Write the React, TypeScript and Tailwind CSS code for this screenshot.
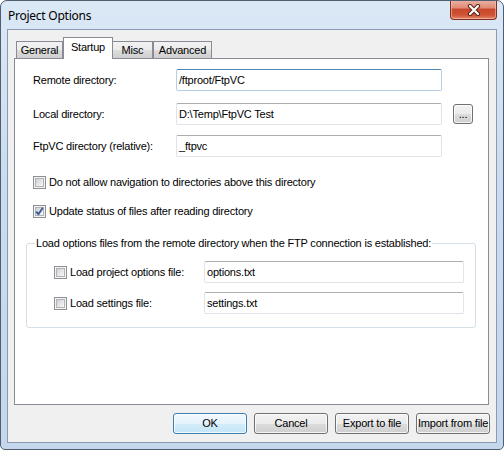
import React from "react";

function TextBox({ value, focused, w }: { value: string; focused?: boolean; w: string }) {
  return (
    <div
      className={`h-[22px] flex items-center pl-[2px] bg-white border rounded-[2px] shrink-0 ${w} ${
        focused
          ? "border-[#b5cfe7] border-t-[#5286b5]"
          : "border-[#e2e3ea] border-t-[#abadb3]"
      }`}
    >
      <span className="whitespace-pre leading-none">{value}</span>
    </div>
  );
}

function Check({ checked }: { checked?: boolean }) {
  return (
    <div className="w-[13px] h-[13px] border border-[#8e8f8f] bg-[#f4f4f4] p-px shrink-0 relative">
      <div className="w-full h-full border border-[#b0b4ba] bg-[linear-gradient(135deg,#cdd1d6_0%,#e6e7e9_55%,#f8f8f8_100%)]" />
      {checked && (
        <svg className="absolute left-0 top-0" width="11" height="11" viewBox="0 0 11 11">
          <path d="M2.2 5.6 L4.4 8.2 L8.8 1.8" fill="none" stroke="#3d5a98" strokeWidth="1.9" strokeLinejoin="round" />
        </svg>
      )}
    </div>
  );
}

function CheckLabel({ checked, label, w }: { checked?: boolean; label: string; w?: string }) {
  return (
    <div className={`flex items-center gap-[3px] shrink-0 ${w ?? ""}`}>
      <Check checked={checked} />
      <span className="leading-none whitespace-nowrap">{label}</span>
    </div>
  );
}

function Btn({ children, primary }: { children: React.ReactNode; primary?: boolean }) {
  return (
    <div
      className={`w-[74px] h-[21px] rounded-[3px] border flex items-center justify-center shadow-[inset_0_0_0_1px_rgba(255,255,255,0.75)] ${
        primary
          ? "border-[#3c7fb1] bg-[linear-gradient(to_bottom,#f1f9fe_0%,#e4f3fc_50%,#d3ecfa_50%,#c6e5f7_100%)]"
          : "border-[#707070] bg-[linear-gradient(to_bottom,#f2f2f2_0%,#ebebeb_50%,#dddddd_50%,#cfcfcf_100%)]"
      }`}
    >
      <span className="leading-none whitespace-nowrap">{children}</span>
    </div>
  );
}

export default function App() {
  return (
    <div className="w-[504px] h-[450px] flex flex-col border border-[#4f5e70] rounded-t-[7px] rounded-b-[5px] overflow-hidden bg-[linear-gradient(to_bottom,#dbe8f6_0%,#cbdcf0_40%,#c4d7ed_100%)] font-['Liberation_Sans',Arial,sans-serif] text-[11px] tracking-[-0.2px] text-black">
      {/* Title bar */}
      <div className="h-[28px] flex items-start justify-between shrink-0">
        <span className="pl-[7px] pt-[7px] text-[12px] leading-[16px] tracking-[-0.25px] font-['Noto_Sans',sans-serif]">Project Options</span>
        <div className="w-[47px] h-[20px] mr-[6px] -mt-px rounded-b-[4px] border border-t-0 border-[#7a3022] bg-[linear-gradient(to_bottom,#eab3a5_0%,#e08c76_40%,#c9472b_50%,#cf5436_80%,#e58a6c_100%)] shadow-[inset_0_0_0_1px_rgba(255,210,190,0.5)] flex items-center justify-center">
          <svg width="14" height="12" viewBox="0 0 14 12">
            <path d="M3 2 L11 10 M11 2 L3 10" stroke="#5b2418" strokeWidth="4.2" strokeLinecap="round" />
            <path d="M3 2 L11 10 M11 2 L3 10" stroke="#ffffff" strokeWidth="2.2" strokeLinecap="round" />
          </svg>
        </div>
      </div>

      {/* Client area */}
      <div className="mx-[6px] h-[414px] border border-[#8a9bb1] bg-[#f0f0f0] flex flex-col pt-[7px] pl-[6px] pr-[6px] pb-[8px] shrink-0">
        {/* Tabs */}
        <div className="h-[21px] flex items-end pl-[2px] shrink-0 mr-px">
          <div className="w-[47px] h-[17px] border border-b-0 border-[#898c95] bg-[linear-gradient(to_bottom,#f2f2f2_0%,#ebebeb_50%,#dddddd_50%,#cfcfcf_100%)] flex items-center justify-center">
            <span className="leading-none">General</span>
          </div>
          <div className="w-[50px] h-[22px] -mb-px relative z-10 border border-b-0 border-[#898c95] bg-white flex items-start justify-center pt-[4px]">
            <span className="leading-none">Startup</span>
          </div>
          <div className="w-[40px] h-[17px] border border-b-0 border-l-0 border-[#898c95] bg-[linear-gradient(to_bottom,#f2f2f2_0%,#ebebeb_50%,#dddddd_50%,#cfcfcf_100%)] flex items-center justify-center">
            <span className="leading-none">Misc</span>
          </div>
          <div className="w-[59px] h-[17px] border border-b-0 border-[#898c95] bg-[linear-gradient(to_bottom,#f2f2f2_0%,#ebebeb_50%,#dddddd_50%,#cfcfcf_100%)] flex items-center justify-center">
            <span className="leading-none">Advanced</span>
          </div>
        </div>

        {/* Panel */}
        <div className="h-[347px] mr-px border border-[#898c95] bg-white flex flex-col shrink-0">
          <div className="pl-[18px] pt-[10px] flex flex-col">
            <div className="h-[22px] flex items-center">
              <span className="w-[143px] leading-none">Remote directory:</span>
              <TextBox value="/ftproot/FtpVC" focused w="w-[266px]" />
            </div>
            <div className="h-[22px] flex items-center mt-[12px]">
              <span className="w-[143px] leading-none">Local directory:</span>
              <TextBox value="D:\Temp\FtpVC Test" w="w-[266px]" />
              <div className="ml-[11px] w-[20px] h-[20px] rounded-[3px] border border-[#707070] bg-[linear-gradient(to_bottom,#f2f2f2_0%,#ebebeb_50%,#dddddd_50%,#cfcfcf_100%)] shadow-[inset_0_0_0_1px_rgba(255,255,255,0.75)] flex items-end justify-center pb-[3px]">
                <span className="leading-none">...</span>
              </div>
            </div>
            <div className="h-[22px] flex items-center mt-[10px]">
              <span className="w-[143px] leading-none">FtpVC directory (relative):</span>
              <TextBox value="_ftpvc" w="w-[266px]" />
            </div>
            <div className="mt-[19px]">
              <CheckLabel label="Do not allow navigation to directories above this directory" />
            </div>
            <div className="mt-[16px]">
              <CheckLabel checked label="Update status of files after reading directory" />
            </div>
          </div>

          {/* Group box */}
          <div className="ml-[11px] mt-[25px] w-[450px] relative border border-[#d5dfe5] rounded-[3px] pt-[17px] pb-[13px] pl-[27px] flex flex-col">
            <span className="absolute left-[8px] -top-[8px] px-px bg-white leading-[14px] whitespace-nowrap">
              Load options files from the remote directory when the FTP connection is established:
            </span>
            <div className="h-[22px] flex items-center">
              <CheckLabel label="Load project options file:" w="w-[150px]" />
              <TextBox value="options.txt" w="w-[260px]" />
            </div>
            <div className="h-[22px] flex items-center mt-[9px]">
              <CheckLabel label="Load settings file:" w="w-[150px]" />
              <TextBox value="settings.txt" w="w-[260px]" />
            </div>
          </div>
        </div>

        {/* Buttons */}
        <div className="mt-[8px] flex justify-end gap-[7px] shrink-0">
          <Btn primary>OK</Btn>
          <Btn>Cancel</Btn>
          <Btn>Export to file</Btn>
          <Btn>Import from file</Btn>
        </div>
      </div>
    </div>
  );
}
